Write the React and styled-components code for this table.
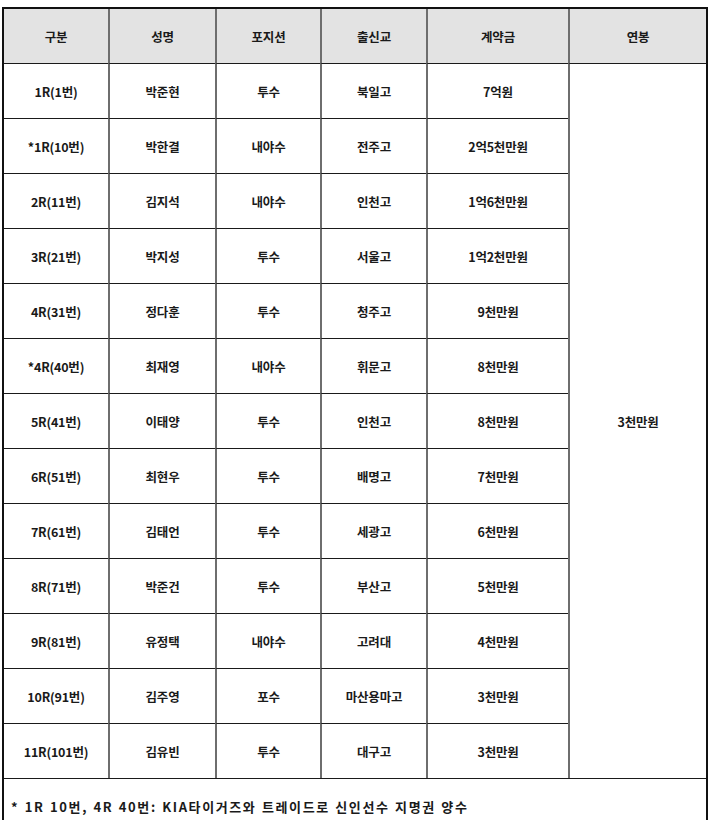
import React from "react";
import styled, { createGlobalStyle } from "styled-components";

const Global = createGlobalStyle`
  html, body { margin: 0; padding: 0; background: #ffffff; }
  body { font-family: "Noto Sans CJK KR", "Noto Sans", sans-serif; }
`;

const Page = styled.div`
  padding: 7px 2px 0 2px;
`;

const Table = styled.table`
  width: 706px;
  border-collapse: separate;
  border-spacing: 0;
  border: 2px solid #111;
  border-bottom: none;
  table-layout: fixed;
  color: #1a1a1a;
  font-size: 12.5px;
  font-weight: 700;
  letter-spacing: -0.2px;
`;

const Cell = styled.td`
  height: 54px;
  padding: 0;
  text-align: center;
  vertical-align: middle;
  font-weight: 700;
  border-top: ${(p) => (p.$first ? "none" : "1px solid #1a1a1a")};
  border-left: ${(p) => (p.$col === 0 ? "none" : "2px solid #6e6e6e")};
  background: ${(p) => (p.$head ? "#e3e3e3" : "#ffffff")};
`;

const NoteCell = styled.td`
  height: 54px;
  padding: 0 0 0 7px;
  text-align: left;
  vertical-align: middle;
  border-top: 1px solid #1a1a1a;
  font-size: 13px;
  letter-spacing: 1.6px;
  word-spacing: 1px;
`;

const widths = [104, 107, 105, 106, 142, 138];
const headers = ["구분", "성명", "포지션", "출신교", "계약금", "연봉"];

const rows = [
  ["1R(1번)", "박준현", "투수", "북일고", "7억원"],
  ["*1R(10번)", "박한결", "내야수", "전주고", "2억5천만원"],
  ["2R(11번)", "김지석", "내야수", "인천고", "1억6천만원"],
  ["3R(21번)", "박지성", "투수", "서울고", "1억2천만원"],
  ["4R(31번)", "정다훈", "투수", "청주고", "9천만원"],
  ["*4R(40번)", "최재영", "내야수", "휘문고", "8천만원"],
  ["5R(41번)", "이태양", "투수", "인천고", "8천만원"],
  ["6R(51번)", "최현우", "투수", "배명고", "7천만원"],
  ["7R(61번)", "김태언", "투수", "세광고", "6천만원"],
  ["8R(71번)", "박준건", "투수", "부산고", "5천만원"],
  ["9R(81번)", "유정택", "내야수", "고려대", "4천만원"],
  ["10R(91번)", "김주영", "포수", "마산용마고", "3천만원"],
  ["11R(101번)", "김유빈", "투수", "대구고", "3천만원"],
];

export default function App() {
  return (
    <>
      <Global />
      <Page>
        <Table>
          <colgroup>
            {widths.map((w, i) => (
              <col key={i} style={{ width: w }} />
            ))}
          </colgroup>
          <thead>
            <tr>
              {headers.map((h, i) => (
                <Cell as="th" key={h} $head $first $col={i}>
                  {h}
                </Cell>
              ))}
            </tr>
          </thead>
          <tbody>
            {rows.map((r, ri) => (
              <tr key={ri}>
                {r.map((c, ci) => (
                  <Cell key={ci} $col={ci}>
                    {c}
                  </Cell>
                ))}
                {ri === 0 && (
                  <Cell $col={5} rowSpan={rows.length}>
                    3천만원
                  </Cell>
                )}
              </tr>
            ))}
            <tr>
              <NoteCell colSpan={6}>
                * 1R 10번, 4R 40번: KIA타이거즈와 트레이드로 신인선수 지명권 양수
              </NoteCell>
            </tr>
          </tbody>
        </Table>
      </Page>
    </>
  );
}
